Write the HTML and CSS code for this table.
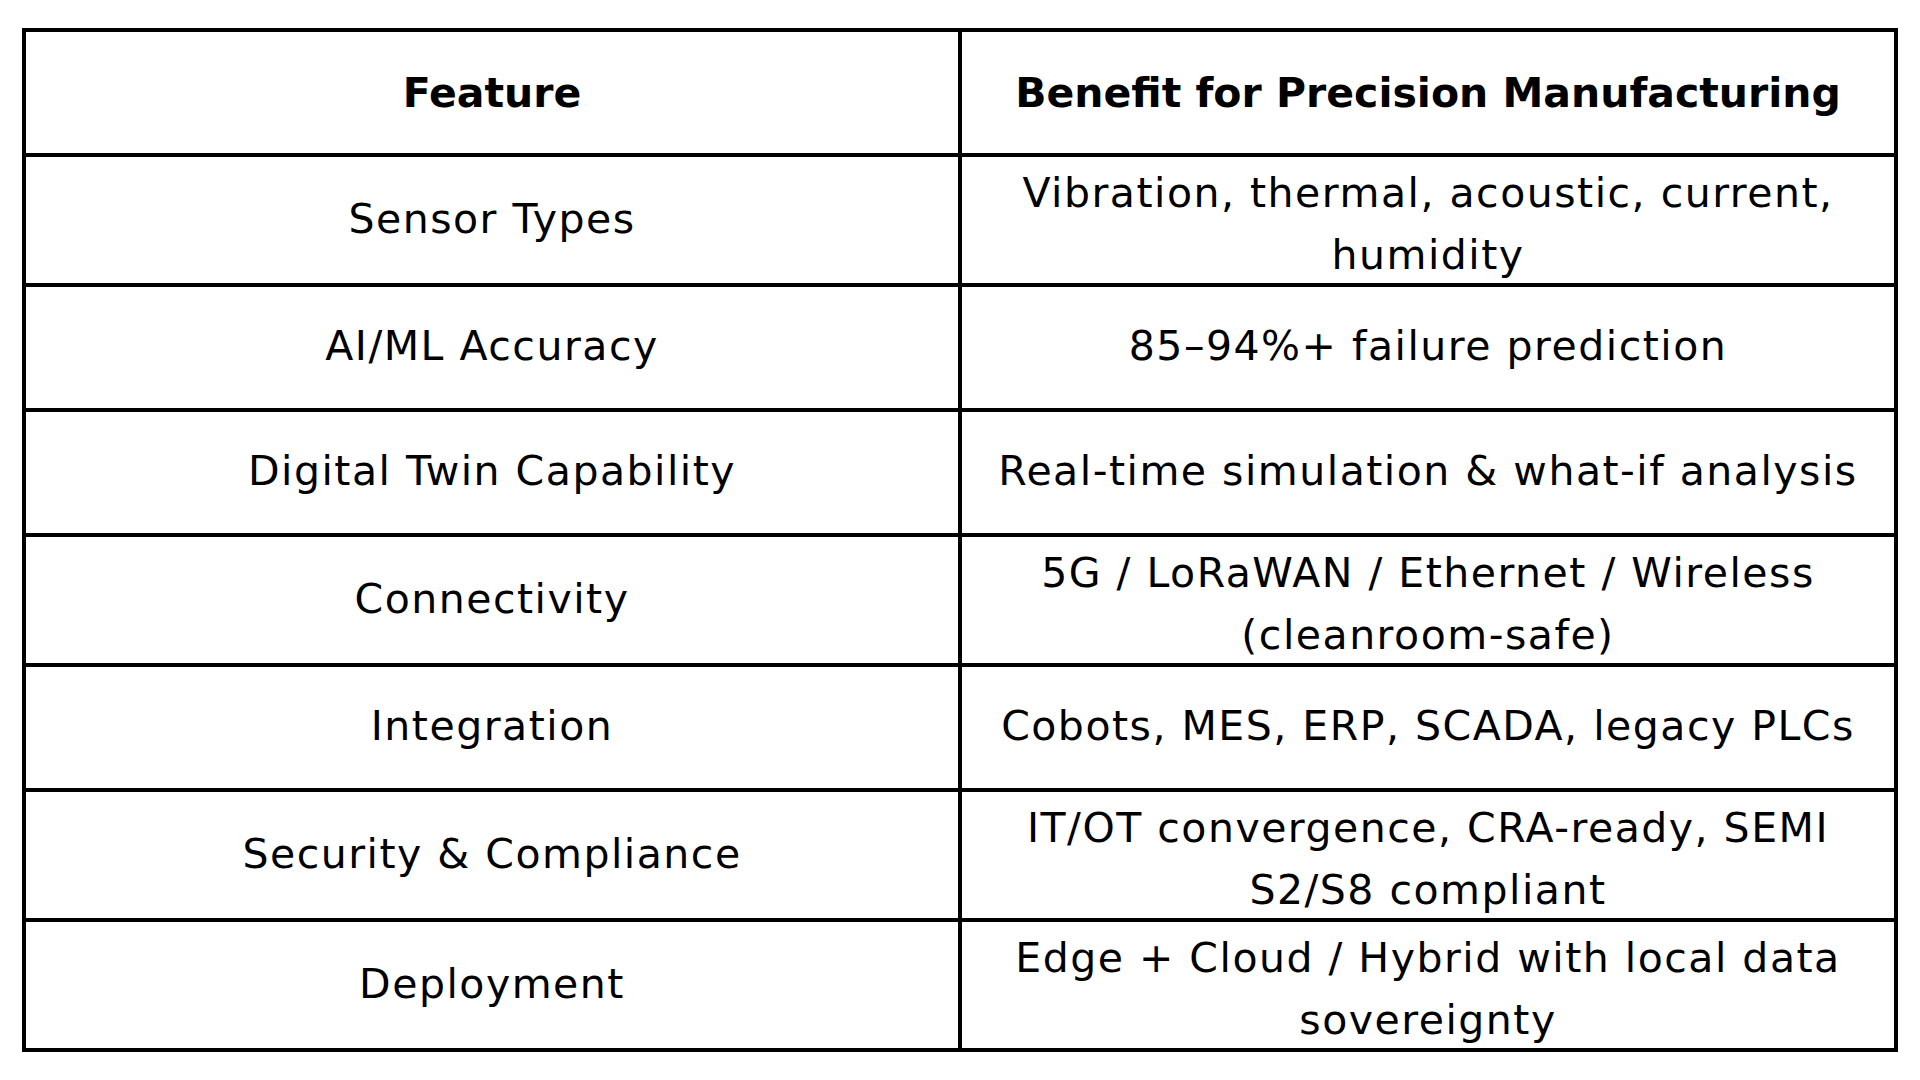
FILE: index.html
```html
<!DOCTYPE html>
<html lang="en">
<head>
<meta charset="utf-8">
<title>Feature Benefits</title>
<link rel="stylesheet" href="styles.css">
</head>
<body>
<table class="spec">
  <thead>
    <tr>
      <th>Feature</th>
      <th>Benefit for Precision Manufacturing</th>
    </tr>
  </thead>
  <tbody>
    <tr>
      <td>Sensor Types</td>
      <td class="two"><span class="lines">Vibration, thermal, acoustic, current,<br>humidity</span></td>
    </tr>
    <tr>
      <td>AI/ML Accuracy</td>
      <td>85–94%+ failure prediction</td>
    </tr>
    <tr>
      <td>Digital Twin Capability</td>
      <td>Real-time simulation &amp; what-if analysis</td>
    </tr>
    <tr>
      <td>Connectivity</td>
      <td class="two"><span class="lines">5G / LoRaWAN / Ethernet / Wireless<br>(cleanroom-safe)</span></td>
    </tr>
    <tr>
      <td>Integration</td>
      <td>Cobots, MES, ERP, SCADA, legacy PLCs</td>
    </tr>
    <tr>
      <td>Security &amp; Compliance</td>
      <td class="two"><span class="lines">IT/OT convergence, CRA-ready, SEMI<br>S2/S8 compliant</span></td>
    </tr>
    <tr>
      <td>Deployment</td>
      <td class="two"><span class="lines">Edge + Cloud / Hybrid with local data<br>sovereignty</span></td>
    </tr>
  </tbody>
</table>
</body>
</html>
```

FILE: styles.css
```css
html, body {
  margin: 0;
  padding: 0;
  background: #ffffff;
}

body {
  padding: 28px 22px 0 22px;
  font-family: "DejaVu Sans", "Liberation Sans", sans-serif;
  color: #000000;
}

.spec {
  width: 1876px;
  table-layout: fixed;
  border-collapse: separate;
  border-spacing: 0;
  border-top: 4px solid #000;
  border-left: 4px solid #000;
}

.spec th,
.spec td {
  box-sizing: border-box;
  width: 50%;
  height: 125px;
  padding: 0 20px 3px 20px;
  border-right: 4px solid #000;
  border-bottom: 4px solid #000;
  text-align: center;
  vertical-align: middle;
  line-height: 62px;
  white-space: nowrap;
}

.spec th {
  font-size: 41px;
  font-weight: 700;
  letter-spacing: 0;
  padding-bottom: 0;
}

.spec td {
  font-size: 41px;
  font-weight: 400;
  letter-spacing: 1.5px;
}

.spec td.two {
  padding: 0 20px;
}

.lines {
  display: block;
  margin: 5px 0 -3px 0;
}
```
